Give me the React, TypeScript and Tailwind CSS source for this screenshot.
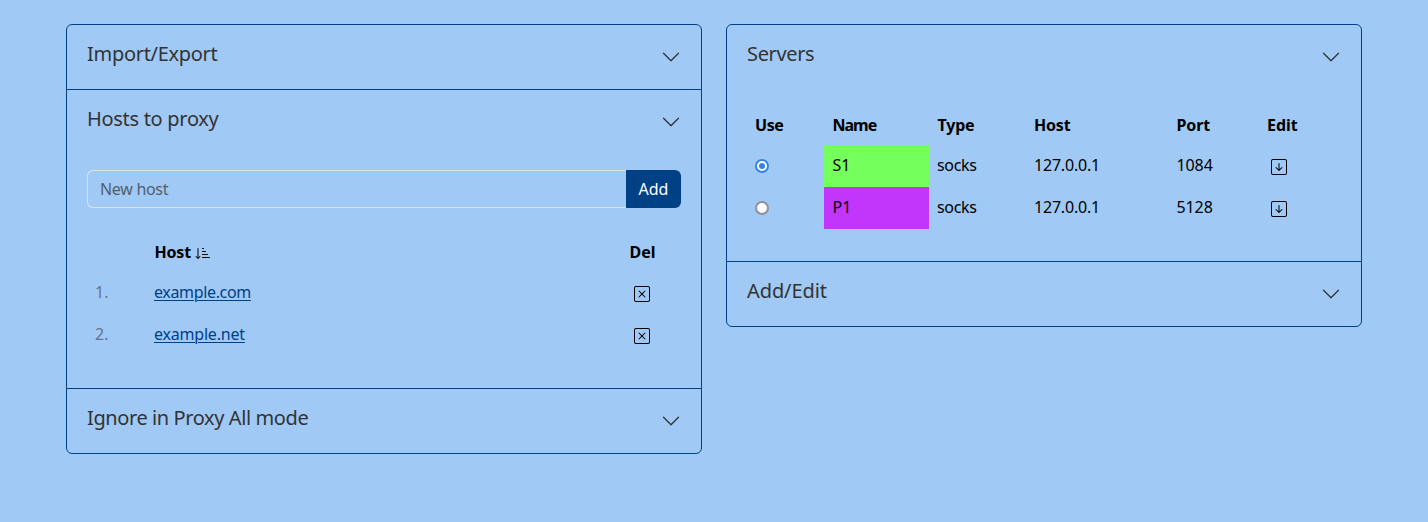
import type { ReactNode } from "react";
import { BsArrowDownSquare, BsChevronDown, BsSortDownAlt, BsXSquare } from "react-icons/bs";

function Section({ title, spacing, children }: { title: string; spacing: string; children?: ReactNode }) {
  return (
    <section className="border-b border-[#004085] last:border-b-0">
      <header className="flex h-16 items-center justify-between px-5">
        <h2 className={`mb-1.5 whitespace-nowrap text-xl/6 text-[#333333] ${spacing}`}>{title}</h2>
        <BsChevronDown className="size-5 text-[#333333]" />
      </header>
      {children && <div className="px-5 pt-4 pb-8">{children}</div>}
    </section>
  );
}

const hosts = [
  { name: "example.com", spacing: "tracking-[-0.35px]" },
  { name: "example.net", spacing: "tracking-[-0.2px]" },
];

const servers = [
  { name: "S1", color: "bg-[#75ff5c]", port: "1084", active: true },
  { name: "P1", color: "bg-[#c235fa]", port: "5128", active: false },
];

const columns = [
  { label: "Use", spacing: "pl-2 tracking-[-0.4px]" },
  { label: "Name", spacing: "pl-[8.5px] tracking-[-1px]" },
  { label: "Type", spacing: "pl-[8.5px] tracking-[-0.2px]" },
  { label: "Host", spacing: "pl-2 tracking-[-0.2px]" },
  { label: "Port", spacing: "pl-[8.5px] tracking-[-0.1px]" },
  { label: "Edit", spacing: "pl-2 tracking-normal" },
];

const serverGrid = "grid grid-cols-[77px_105px_97px_142px_91px_82px]";

export default function App() {
  return (
    <main className="flex min-h-[522px] items-start gap-6 bg-[#a0c9f5] px-[66px] pt-6 font-['Noto_Sans',sans-serif] text-base text-black">
      <div className="w-[636px] rounded-md border border-[#004085]">
        <Section title="Import/Export" spacing="tracking-[-0.3px]" />
        <Section title="Hosts to proxy" spacing="tracking-[-0.3px]">
          <form className="flex h-[38px]">
            <input
              className="min-w-0 flex-1 rounded-l-md border border-r-0 border-[#dee2e6] px-3 tracking-[-0.3px] placeholder:text-[#52606d]"
              placeholder="New host"
            />
            <button type="button" className="w-[55px] rounded-r-md bg-[#004085] text-white">
              Add
            </button>
          </form>
          <div className="mt-6 grid grid-cols-[59px_475px_60px]">
            <div />
            <div className="flex h-10 items-center gap-1 pr-2 pl-[8.5px] font-bold tracking-[-0.2px]">
              Host <BsSortDownAlt className="mt-0.5 size-4" />
            </div>
            <div className="flex h-10 items-center pr-2 pl-[8.5px] font-bold">Del</div>
          </div>
          {hosts.map((host, i) => (
            <div key={host.name} className="grid h-[42px] grid-cols-[59px_475px_60px] items-center">
              <span className="px-2 pb-0.5 text-[#65758a]">{i + 1}.</span>
              <span className="px-2 pb-0.5">
                <a className={`text-[#004085] underline decoration-1 underline-offset-2 ${host.spacing}`}>{host.name}</a>
              </span>
              <BsXSquare className="ml-[13px] mt-0.5 size-4" />
            </div>
          ))}
        </Section>
        <Section title="Ignore in Proxy All mode" spacing="tracking-[-0.4px]" />
      </div>
      <div className="w-[636px] rounded-md border border-[#004085]">
        <Section title="Servers" spacing="tracking-[-0.35px]">
          <div className={`${serverGrid} h-10 items-center font-bold`}>
            {columns.map(({ label, spacing }) => (
              <span key={label} className={spacing}>{label}</span>
            ))}
          </div>
          {servers.map((server) => (
            <div key={server.name} className={`${serverGrid} h-[42px] items-center`}>
              <span
                className={`ml-2 flex size-3.5 items-center justify-center rounded-full border-2 bg-white ${server.active ? "border-[#3584e4]" : "border-[#8f8f9d]"}`}
              >
                {server.active && <span className="size-1.5 rounded-full bg-[#3584e4]" />}
              </span>
              <span className={`flex h-full items-center pr-2 pb-0.5 pl-[8.5px] ${server.color}`}>{server.name}</span>
              <span className="px-2 pb-0.5 tracking-[-0.3px]">socks</span>
              <span className="px-2 pb-0.5 tracking-[-0.2px]">127.0.0.1</span>
              <span className="pr-2 pb-0.5 pl-[8.5px] tracking-[-0.1px]">{server.port}</span>
              <BsArrowDownSquare className="ml-3 mt-0.5 size-4" />
            </div>
          ))}
        </Section>
        <Section title="Add/Edit" spacing="tracking-[-0.1px]" />
      </div>
    </main>
  );
}
